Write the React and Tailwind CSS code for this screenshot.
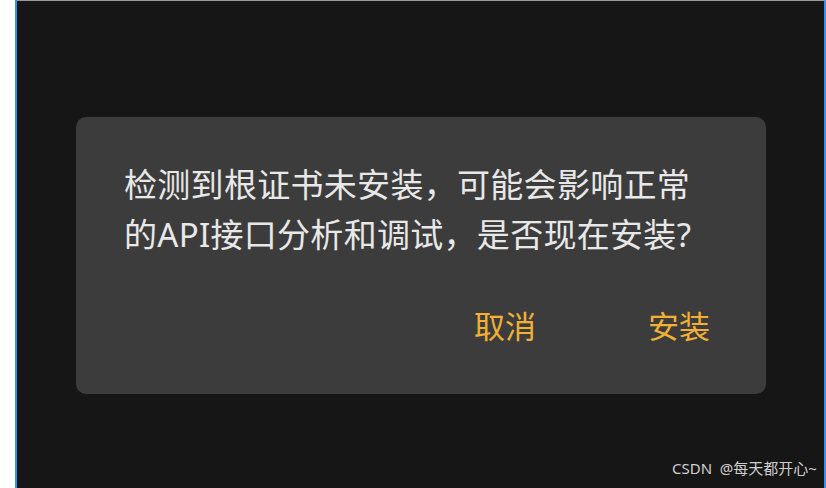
export default function App() {
    return (
        <div className="relative flex h-[488px] w-[826px] overflow-hidden bg-white" style={{ fontFamily: '"Noto Sans", "Noto Sans CJK SC", sans-serif' }}>
            <div className="w-[15px] shrink-0 bg-white" />
            <div className="w-[2px] shrink-0 bg-[#3b8eea]" />
            <div className="flex flex-1 flex-col border-t border-r-2 border-t-[#9a9a9a] border-r-[#3b8eea] bg-[#161616]">
                <div className="ml-[59px] mt-[116px] h-[277px] w-[690px] rounded-[10px] bg-[#3c3c3c] pt-[43px] pl-[48px] pr-[56px]">
                    <p className="text-[33px] leading-[50px] text-[#e8e8e8] whitespace-nowrap tracking-[0.3px]">
                        检测到根证书未安装，可能会影响正常
                        <br />
                        的API接口分析和调试，是否现在安装?
                    </p>
                    <div className="mt-[46px] flex justify-end gap-[112px] text-[31px] leading-[40px] text-[#f2b134]">
                        <span>取消</span>
                        <span>安装</span>
                    </div>
                </div>
            </div>
            <div className="absolute left-[672px] top-[458px] text-[15px] leading-[20px] text-[#cfcfcf] whitespace-nowrap">
                CSDN&nbsp; @每天都开心~
            </div>
        </div>
    );
}
